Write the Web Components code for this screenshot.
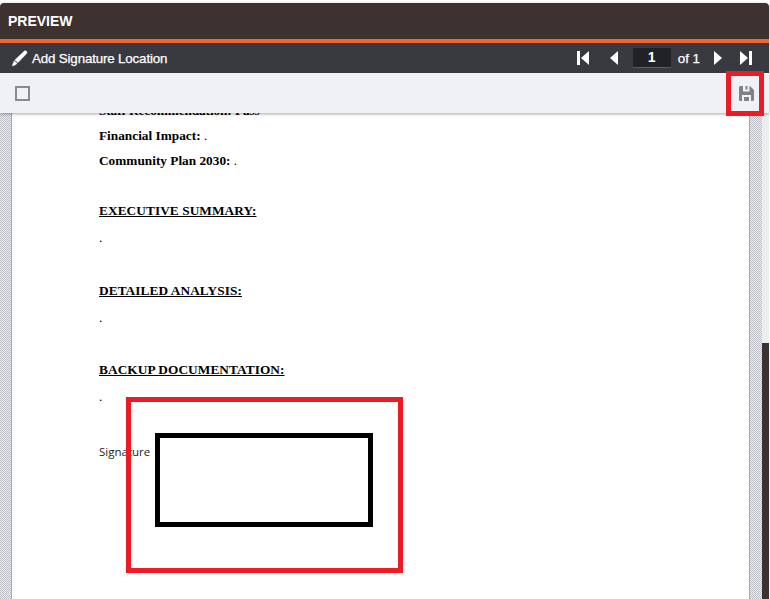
<!DOCTYPE html>
<html>
<head>
<meta charset="utf-8">
<style>
  html, body { margin: 0; height: 100%; background: #fff; overflow: hidden; }
  body { font-family: "Liberation Sans", Arial, sans-serif; }
</style>
</head>
<body>
<preview-panel>
  <preview-header slot="header">PREVIEW</preview-header>
  <pager-bar slot="pager"></pager-bar>
  <action-bar slot="actions"></action-bar>
  <doc-viewer slot="viewer">
    <doc-line clipped>Staff Recommendation: Pass</doc-line>
    <doc-line gap="9">Financial Impact: <span>.</span></doc-line>
    <doc-line gap="9">Community Plan 2030: <span>.</span></doc-line>
    <doc-heading gap="34">EXECUTIVE SUMMARY:</doc-heading>
    <doc-dot></doc-dot>
    <doc-heading gap="36">DETAILED ANALYSIS:</doc-heading>
    <doc-dot></doc-dot>
    <doc-heading gap="35">BACKUP DOCUMENTATION:</doc-heading>
    <doc-dot></doc-dot>
    <signature-field></signature-field>
  </doc-viewer>
</preview-panel>

<script>
class PreviewPanel extends HTMLElement {
  constructor() {
    super()
    this.attachShadow({ mode: 'open' })
    this.shadowRoot.innerHTML = `
      <style>
        :host {
          display: flex;
          flex-direction: column;
          height: 596px;
          width: 769px;
          margin-top: 3px;
          position: relative;
        }
        .top { position: relative; z-index: 2; box-shadow: 0 1px 3px rgba(0,0,0,.35); }
        .viewer { flex: 1; min-height: 0; display: flex; }
        .callout {
          position: absolute;
          left: 726px;
          top: 68px;
          width: 28px;
          height: 35px;
          border: 5px solid #ed1c24;
          z-index: 3;
        }
      </style>
      <div class="top">
        <slot name="header"></slot>
        <slot name="pager"></slot>
        <slot name="actions"></slot>
      </div>
      <div class="viewer"><slot name="viewer"></slot></div>
      <div class="callout"></div>
    `
  }
}

class PreviewHeader extends HTMLElement {
  constructor() {
    super()
    this.attachShadow({ mode: 'open' })
    this.shadowRoot.innerHTML = `
      <style>
        :host {
          display: flex;
          align-items: center;
          height: 36px;
          padding-left: 8px;
          background: #3e3230;
          border-bottom: 4px solid #f36531;
          border-radius: 4px 4px 0 0;
          color: #fff;
          font: bold 14px "Liberation Sans", Arial, sans-serif;
        }
      </style>
      <slot></slot>
    `
  }
}

class PagerBar extends HTMLElement {
  constructor() {
    super()
    this.attachShadow({ mode: 'open' })
    this.shadowRoot.innerHTML = `
      <style>
        :host {
          display: flex;
          align-items: center;
          height: 30px;
          padding: 0 17px 0 11px;
          background: #393a40;
          color: #fff;
          font: 13.33px "Liberation Sans", Arial, sans-serif;
          -webkit-text-stroke: .25px #fff;
        }
        .add { display: flex; align-items: center; gap: 4px; flex: 1; letter-spacing: -.15px; }
        .nav { display: flex; align-items: center; }
        svg { display: block; fill: #fff; }
        .pencil { stroke: #fff; stroke-width: .5; }
        .page {
          width: 38px;
          height: 19px;
          line-height: 19px;
          margin: 0 7px 0 14px;
          background: #212226;
          border-bottom: 1px solid #5b5d63;
          text-align: center;
          font-weight: bold;
          font-size: 14px;
          -webkit-text-stroke: 0;
        }
        .of { margin-right: 13px; }
      </style>
      <div class="add">
        <svg class="pencil" width="17" height="17" viewBox="0 0 17 17">
          <path d="M13.2 1.2c.8-.6 1.900-.4 2.400.3.500.7.400 1.600-.200 2.200L7 12.600 3.900 9.900zM3.200 10.800l2.900 2.600-2.100 1.600c-.700.500-1.500.600-2.600.700.300-1.200.500-2 .900-2.800z"/>
        </svg>
        Add Signature Location
      </div>
      <div class="nav">
        <svg width="13" height="16" viewBox="0 0 13 16"><path d="M0 1h3v14H0zM12 1v14L4 8z"/></svg>
        <svg width="10" height="16" viewBox="0 0 10 16" style="margin-left:19px"><path d="M9 1v14L1 8z"/></svg>
        <div class="page">1</div>
        <div class="of">of 1</div>
        <svg width="10" height="16" viewBox="0 0 10 16"><path d="M1 1v14l8-7z"/></svg>
        <svg width="13" height="16" viewBox="0 0 13 16" style="margin-left:16px"><path d="M1 1v14l8-7zM10 1h3v14h-3z"/></svg>
      </div>
    `
  }
}

class ActionBar extends HTMLElement {
  constructor() {
    super()
    this.attachShadow({ mode: 'open' })
    this.shadowRoot.innerHTML = `
      <style>
        :host {
          display: flex;
          align-items: center;
          justify-content: space-between;
          height: 40px;
          padding: 0 15px 0 15px;
          background: #f0f1f6;
        }
        .check { width: 11px; height: 11px; border: 2px solid #8a8b8f; }
        svg { display: block; fill: #808186; }
      </style>
      <div class="check"></div>
      <svg width="15" height="15" viewBox="0 0 15 15">
        <path fill-rule="evenodd" d="M0 1.500C0 .7.700 0 1.500 0H11l4 4v9.500c0 .8-.700 1.500-1.500 1.500h-12C.7 15 0 14.300 0 13.500zM4 0v5.500h6.500V0H8.500v3.500H6.500V0zM3 15V9h9v6h-2V11H5v4z"/>
      </svg>
    `
  }
}

class DocViewer extends HTMLElement {
  constructor() {
    super()
    this.attachShadow({ mode: 'open' })
    this.shadowRoot.innerHTML = `
      <style>
        :host { display: flex; flex: 1; min-width: 0; background: #fff; overflow: hidden; }
        .hatch {
          width: 12px;
          flex: none;
          background: repeating-conic-gradient(#b9bac2 0 25%, #f1f1f4 0 50%) 0 0 / 2px 2px;
        }
        .hatch.left { width: 11px; border-right: 1px solid #a5a6aa; }
        .hatch.right { width: 12px; border-left: 1px solid #a5a6aa; }
        .page {
          flex: 1;
          min-width: 0;
          padding: 0 0 0 87px;
          background: #fff;
          position: relative;
          overflow: hidden;
        }
        .track { width: 7px; flex: none; display: flex; flex-direction: column; background: #eeeeee; }
        .thumb { margin-top: 230px; flex: 1; background: #3e3230; }
      </style>
      <div class="hatch left"></div>
      <div class="page"><slot></slot></div>
      <div class="hatch right"></div>
      <div class="track"><div class="thumb"></div></div>
    `
  }
}

class DocLine extends HTMLElement {
  constructor() {
    super()
    this.attachShadow({ mode: 'open' })
    this.shadowRoot.innerHTML = `
      <style>
        :host {
          display: block;
          color: #000;
          font: bold 13.3px/16px "Liberation Serif", "Times New Roman", serif;
          white-space: nowrap;
        }
        :host([clipped]) { margin-top: -10px; letter-spacing: -.1px; }
      </style>
      <slot></slot>
    `
  }
  connectedCallback() {
    const gap = this.getAttribute('gap')
    if (gap) this.style.marginTop = gap + 'px'
    const dot = this.querySelector('span')
    if (dot) dot.style.fontWeight = 'normal'
  }
}

class DocHeading extends HTMLElement {
  constructor() {
    super()
    this.attachShadow({ mode: 'open' })
    this.shadowRoot.innerHTML = `
      <style>
        :host {
          display: block;
          color: #000;
          font: bold 13.3px/16px "Liberation Serif", "Times New Roman", serif;
          letter-spacing: .08px;
          text-decoration: underline;
          white-space: nowrap;
        }
      </style>
      <slot></slot>
    `
  }
  connectedCallback() {
    this.style.marginTop = this.getAttribute('gap') + 'px'
  }
}

class DocDot extends HTMLElement {
  constructor() {
    super()
    this.attachShadow({ mode: 'open' })
    this.shadowRoot.innerHTML = `
      <style>
        :host {
          display: block;
          margin-top: 11px;
          padding-bottom: 1px;
          color: #000;
          font: 13.3px/16px "Liberation Serif", "Times New Roman", serif;
        }
      </style>
      .
    `
  }
}

class SignatureField extends HTMLElement {
  constructor() {
    super()
    this.attachShadow({ mode: 'open' })
    this.shadowRoot.innerHTML = `
      <style>
        :host {
          display: block;
          position: relative;
          margin-top: 38px;
          color: #222;
          font: 11.5px/16px "Open Sans", sans-serif;
        }
        .sign {
          position: absolute;
          left: 56px;
          top: -11px;
          width: 208px;
          height: 84px;
          border: 5px solid #000;
        }
        .callout {
          position: absolute;
          left: 27px;
          top: -47px;
          width: 267px;
          height: 166px;
          border: 5px solid #ed1c24;
        }
      </style>
      <span>Signature</span>
      <div class="sign"></div>
      <div class="callout"></div>
    `
  }
}

customElements.define('preview-panel', PreviewPanel)
customElements.define('preview-header', PreviewHeader)
customElements.define('pager-bar', PagerBar)
customElements.define('action-bar', ActionBar)
customElements.define('doc-viewer', DocViewer)
customElements.define('doc-line', DocLine)
customElements.define('doc-heading', DocHeading)
customElements.define('doc-dot', DocDot)
customElements.define('signature-field', SignatureField)
</script>
</body>
</html>
